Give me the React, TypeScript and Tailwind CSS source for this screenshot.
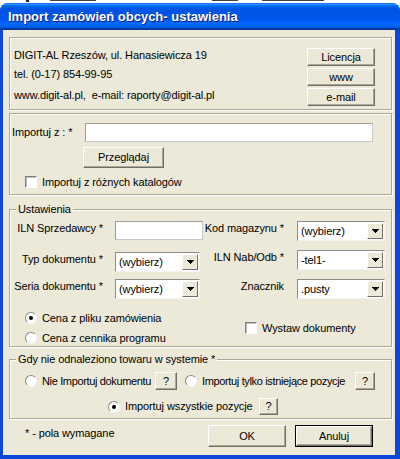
import React from "react"

function Btn({
  children,
  className = "",
  isDefault = false,
}: {
  children: React.ReactNode
  className?: string
  isDefault?: boolean
}) {
  const face = (
    <div className="flex-1 flex items-center justify-center bg-[#ECE9D8] border border-t-white border-l-white border-r-[#716F64] border-b-[#716F64] shadow-[inset_-1px_-1px_0_#ACA899]">
      {children}
    </div>
  )
  if (isDefault) {
    return <div className={`flex border border-black ${className}`}>{face}</div>
  }
  return <div className={`flex ${className}`}>{face}</div>
}

function Checkbox() {
  return (
    <span className="w-[12px] h-[12px] shrink-0 bg-white border border-t-[#808080] border-l-[#808080] border-r-white border-b-white shadow-[inset_1px_1px_0_#C0C0C0]" />
  )
}

function Radio({ checked = false }: { checked?: boolean }) {
  return (
    <span className="w-[12px] h-[12px] shrink-0 rounded-full bg-white border border-t-[#8A8A8A] border-l-[#8A8A8A] border-r-[#F4F4F4] border-b-[#F4F4F4] flex items-center justify-center">
      {checked && <span className="w-[4px] h-[4px] rounded-full bg-black" />}
    </span>
  )
}

function Select({ value, className = "" }: { value: string; className?: string }) {
  return (
    <div
      className={`h-[20px] flex bg-white border border-t-[#8C8C8C] border-l-[#8C8C8C] border-r-[#F4F4F4] border-b-[#F4F4F4] ${className}`}
    >
      <span className="flex-1 pl-[3px] leading-[18px] overflow-hidden whitespace-nowrap">{value}</span>
      <span className="w-[16px] my-[1px] mr-[1px] flex items-center justify-center bg-[#ECE9D8] border border-t-white border-l-white border-r-[#716F64] border-b-[#716F64]">
        <svg width="7" height="4" viewBox="0 0 7 4" shapeRendering="crispEdges">
          <path d="M0 0h7v1h-1v1h-1v1h-1v1h-1v-1h-1v-1h-1v-1h-1z" fill="#000" />
        </svg>
      </span>
    </div>
  )
}

function TextField({ className = "" }: { className?: string }) {
  return (
    <div
      className={`bg-white border border-t-[#9C9C9C] border-l-[#9C9C9C] border-r-[#C8C8C8] border-b-[#C8C8C8] ${className}`}
    />
  )
}

const group = "border border-[#ACA899] shadow-[inset_1px_1px_0_#fff,1px_1px_0_#fff]"

export default function App() {
  return (
    <div className="w-[400px] h-[459px] bg-white overflow-hidden font-['Liberation_Sans',Arial,sans-serif] text-[11px] tracking-[-0.1px] text-black">
      <svg width="400" height="3" className="block">
        <rect x="26" y="0" width="3" height="2" fill="#222" />
        <rect x="50" y="0" width="46" height="1" fill="#444" />
        <rect x="212" y="0" width="26" height="1" fill="#444" />
        <rect x="262" y="0" width="62" height="1" fill="#444" />
      </svg>

      <div className="h-[456px] flex flex-col rounded-t-[8px] bg-[#0B47D9]">
        <div className="h-[27px] flex items-center pl-[8px] rounded-t-[8px] bg-[linear-gradient(to_bottom,#0058ee_0%,#3593ff_4%,#288eff_6%,#127dff_8%,#036ffc_10%,#0262ee_14%,#0057e5_20%,#0054e3_24%,#0055eb_56%,#005bf5_66%,#026afe_76%,#0062ef_86%,#0052d6_92%,#0040ab_94%,#003092_100%)]">
          <span className="text-[13px] tracking-normal font-bold text-white [text-shadow:1px_1px_0_#0A1E8C]">
            Import zamówień obcych- ustawienia
          </span>
        </div>

        <div className="flex-1 ml-[3px] mr-[5px] mb-[4px] bg-[#ECE9D8] pl-[6px] pr-[3px] flex flex-col">
          {/* firma */}
          <div className={`mt-[7px] h-[73px] flex justify-between ${group}`}>
            <div className="pl-[4px] pt-[8px] flex flex-col">
              <div className="h-[19px] leading-[19px]">DIGIT-AL Rzeszów, ul. Hanasiewicza 19</div>
              <div className="h-[19px] leading-[19px]">tel. (0-17) 854-99-95</div>
              <div className="mt-[2px] h-[19px] leading-[19px] whitespace-pre">
                www.digit-al.pl,  e-mail: raporty@digit-al.pl
              </div>
            </div>
            <div className="pt-[10px] pr-[16px] flex flex-col gap-[2px]">
              <Btn className="w-[68px] h-[18px]">Licencja</Btn>
              <Btn className="w-[68px] h-[18px]">www</Btn>
              <Btn className="w-[68px] h-[18px]">e-mail</Btn>
            </div>
          </div>

          {/* import z */}
          <div className={`mt-[3px] h-[82px] pl-[2px] pt-[9px] flex flex-col ${group}`}>
            <div className="flex items-center">
              <span className="w-[73px] -mt-[1px]">Importuj z : *</span>
              <TextField className="w-[288px] h-[19px]" />
            </div>
            <Btn className="mt-[5px] ml-[71px] w-[81px] h-[21px]">Przeglądaj</Btn>
            <div className="mt-[6px] ml-[13px] flex items-center gap-[5px]">
              <Checkbox />
              <span>Importuj z różnych katalogów</span>
            </div>
          </div>

          {/* ustawienia */}
          <fieldset className={`mt-[7px] h-[145px] ${group}`}>
            <legend className="ml-[6px] px-[2px] leading-[14px] bg-[#ECE9D8]">Ustawienia</legend>
            <div className="mt-[5px] grid grid-cols-[105px_88px_94px_88px] grid-rows-[20px_20px_20px] gap-y-[9px]">
              <span className="self-start leading-[14px] text-right pr-[12px]">ILN Sprzedawcy *</span>
              <TextField className="h-[19px]" />
              <span className="self-start leading-[14px] text-right pr-[13px]">Kod magazynu *</span>
              <Select value="(wybierz)" />

              <span className="self-start leading-[14px] text-right pr-[12px] mt-[2px]">Typ dokumentu *</span>
              <Select value="(wybierz)" className="w-[85px] mt-[2px]" />
              <span className="self-start leading-[14px] text-right pr-[13px]">ILN Nab/Odb *</span>
              <Select value="-tel1-" />

              <span className="self-start leading-[14px] text-right pr-[12px]">Seria dokumentu *</span>
              <Select value="(wybierz)" className="w-[85px]" />
              <span className="self-start leading-[14px] text-right pr-[13px]">Znacznik</span>
              <Select value=".pusty" />
            </div>
            <div className="mt-[11px] flex">
              <div className="pl-[15px] w-[235px] flex flex-col gap-[4px]">
                <div className="h-[16px] flex items-center gap-[5px]">
                  <Radio checked />
                  <span>Cena z pliku zamówienia</span>
                </div>
                <div className="h-[16px] flex items-center gap-[5px]">
                  <Radio />
                  <span>Cena z cennika programu</span>
                </div>
              </div>
              <div className="self-center flex items-center gap-[5px]">
                <Checkbox />
                <span>Wystaw dokumenty</span>
              </div>
            </div>
          </fieldset>

          {/* brak towaru */}
          <fieldset className={`mt-[5px] h-[67px] ${group}`}>
            <legend className="ml-[6px] px-[2px] leading-[14px] bg-[#ECE9D8]">
              Gdy nie odnaleziono towaru w systemie *
            </legend>
            <div className="mt-[6px] h-[18px] pl-[15px] flex items-center">
              <Radio />
              <span className="ml-[5px] w-[110px] whitespace-nowrap tracking-[-0.35px]">Nie Importuj dokumentu</span>
              <Btn className="ml-[3px] w-[22px] h-[18px]">?</Btn>
              <span className="ml-[8px] flex">
                <Radio />
              </span>
              <span className="ml-[5px] w-[150px] whitespace-nowrap tracking-[-0.35px]">Importuj tylko istniejące pozycje</span>
              <Btn className="ml-[3px] w-[20px] h-[18px]">?</Btn>
            </div>
            <div className="mt-[8px] h-[17px] pl-[98px] flex items-center">
              <Radio checked />
              <span className="ml-[5px] w-[131px] whitespace-nowrap">Importuj wszystkie pozycje</span>
              <Btn className="ml-[3px] w-[19px] h-[17px]">?</Btn>
            </div>
          </fieldset>

          {/* stopka */}
          <div className="mt-[6px] flex items-start">
            <span className="pl-[16px] mt-[1px] leading-[14px]">* - pola wymagane</span>
            <div className="ml-auto mr-[19px] flex gap-[9px]">
              <Btn className="w-[78px] h-[22px]">OK</Btn>
              <Btn className="w-[78px] h-[22px]" isDefault>
                Anuluj
              </Btn>
            </div>
          </div>
        </div>
      </div>
    </div>
  )
}
